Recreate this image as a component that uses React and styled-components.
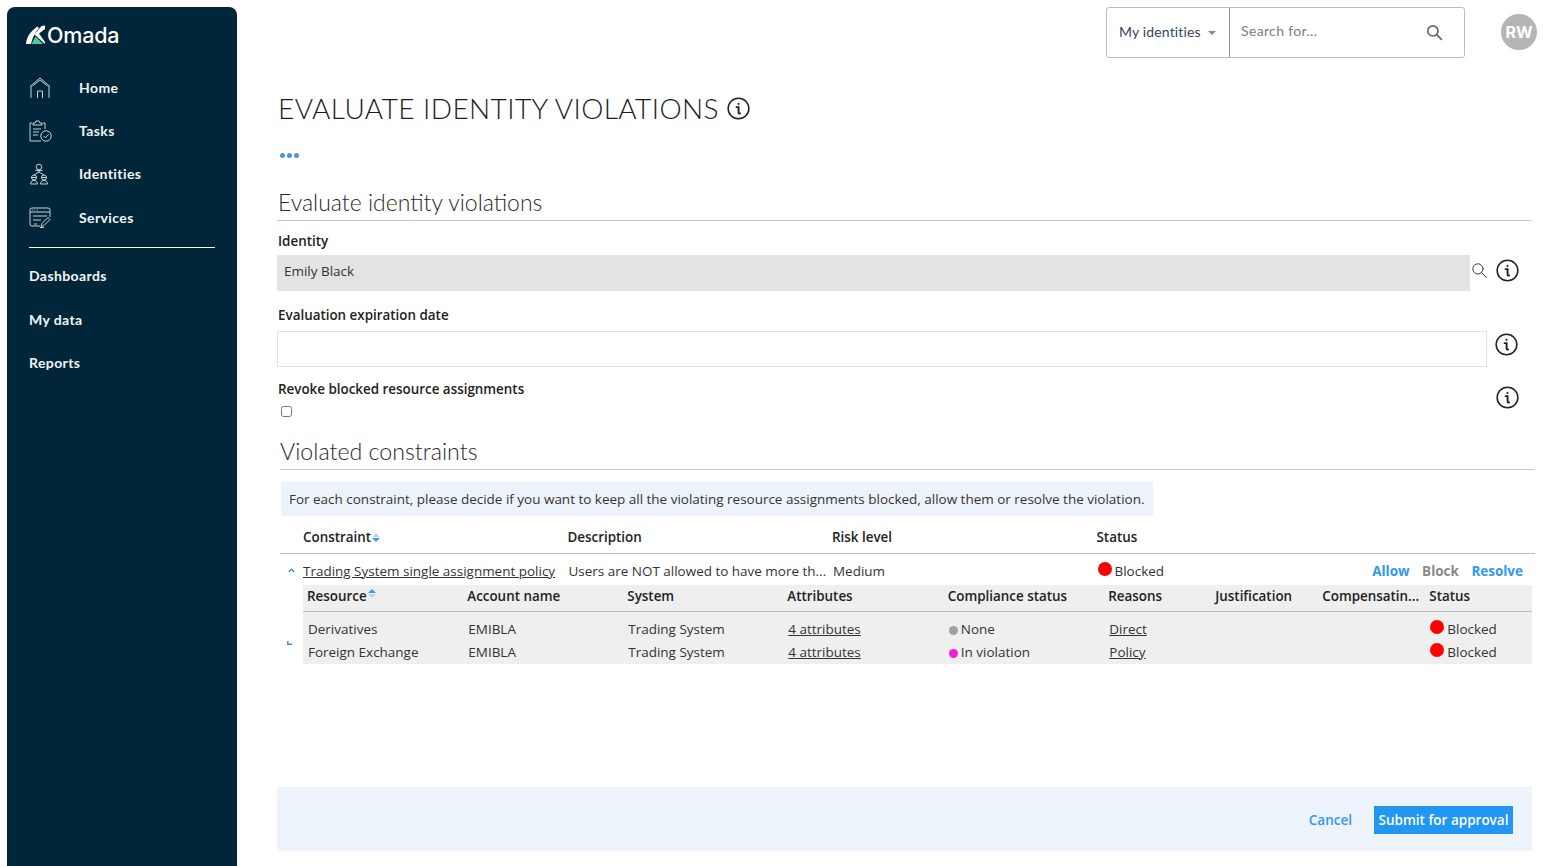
import React from "react";
import styled, { createGlobalStyle } from "styled-components";

const Global = createGlobalStyle`
  html, body { margin: 0; padding: 0; height: 866px; overflow: hidden; background: #fff; }
  * { box-sizing: border-box; }
  body { font-family: "Open Sans", "Liberation Sans", sans-serif; font-size: 13.47px; color: #333; }
`;

const Page = styled.div`
  display: flex;
  height: 866px;
  padding-top: 7px;
  padding-left: 7px;
`;

const Sidebar = styled.nav`
  width: 230px;
  flex: none;
  background: #012639;
  border-radius: 8px 8px 0 0;
  color: #f2f5f6;
  font-family: Lato, Inter, sans-serif;
  padding: 17px 0 0 18px;
`;

const Logo = styled.div`
  display: flex;
  align-items: center;
  gap: 1px;
  height: 22px;
  font-family: Inter, sans-serif;
  font-size: 21.5px;
  font-weight: 500;
  color: #fff;
  letter-spacing: -0.2px;
  margin-bottom: 20px;
`;

const MainNav = styled.div`
  display: flex;
  flex-direction: column;
  margin-left: 4px;
`;

const NavItem = styled.div`
  display: flex;
  align-items: center;
  height: ${(p) => p.$height}px;
  font-size: 14px;
  font-weight: 700;
  letter-spacing: 0.4px;
`;

const NavIcon = styled.span`
  width: 50px;
  flex: none;
  display: flex;
  align-items: center;
`;

const NavRule = styled.div`
  width: 186px;
  height: 1px;
  background: #fff;
  margin: 8px 0 6px 4px;
`;

const SubNav = styled.div`
  display: flex;
  flex-direction: column;
  margin-left: 4px;
`;

const Main = styled.main`
  flex: 1;
  min-width: 0;
  padding-left: 40px;
  display: flex;
  flex-direction: column;
  margin-top: -7px;
  padding-top: 7px;
`;

const TopBar = styled.div`
  display: flex;
  justify-content: flex-end;
  align-items: flex-start;
  padding-right: 14px;
  gap: 36px;
`;

const SearchBox = styled.div`
  width: 359px;
  height: 51px;
  display: flex;
  border: 1px solid #bdbdbd;
  border-radius: 3px;
  font-family: Lato, Inter, sans-serif;
`;

const ScopeButton = styled.div`
  width: 123px;
  display: flex;
  align-items: center;
  gap: 7px;
  padding: 0 0 2px 12px;
  border-right: 1px solid #8f8f8f;
  font-size: 14px;
  letter-spacing: 0.15px;
  color: #33475b;
`;

const Caret = styled.span`
  width: 0;
  height: 0;
  margin-top: 2px;
  border-left: 4px solid transparent;
  border-right: 4px solid transparent;
  border-top: 4px solid #8a8a8a;
`;

const SearchField = styled.div`
  flex: 1;
  display: flex;
  align-items: center;
  justify-content: space-between;
  padding: 0 21px 0 11px;
  font-size: 14px;
  letter-spacing: 0.35px;
  color: #7d7d7d;
`;

const SearchHint = styled.span`
  margin-top: -4px;
`;

const Avatar = styled.div`
  width: 36px;
  height: 36px;
  margin-top: 7px;
  border-radius: 50%;
  background: #b5b5b5;
  color: #fff;
  font-family: Inter, sans-serif;
  font-weight: 700;
  font-size: 16px;
  display: flex;
  align-items: center;
  justify-content: center;
`;

const Title = styled.h1`
  margin: 30px 0 0 1px;
  height: 40px;
  display: flex;
  align-items: center;
  gap: 8px;
  font-family: Lato, sans-serif;
  font-size: 28px;
  font-weight: 300;
  color: #1c1c1c;
  line-height: 40px;
  letter-spacing: 0.42px;
`;

const Dots = styled.div`
  display: flex;
  gap: 2px;
  margin: 25px 0 0 3px;
  height: 5px;
`;

const Dot = styled.i`
  width: 5px;
  height: 5px;
  border-radius: 50%;
  background: #4a97dd;
`;

const SectionHead = styled.h2`
  margin: ${(p) => p.$top}px 0 0 ${(p) => p.$left || 0}px;
  width: ${(p) => p.$width}px;
  height: 34px;
  line-height: 30px;
  padding-left: ${(p) => p.$inset || 0}px;
  border-bottom: 1px solid #c8c8c8;
  font-family: Lato, sans-serif;
  font-size: ${(p) => p.$size}px;
  font-weight: 300;
  color: #2a2a2a;
`;

const FieldRow = styled.div`
  display: flex;
  align-items: center;
  width: 1255px;
`;

const Label = styled.div`
  height: 20px;
  line-height: 20px;
  margin-top: ${(p) => p.$top}px;
  padding-left: 1px;
  font-size: 13.4px;
  font-weight: 600;
  color: #222;
`;

const ReadOnly = styled.div`
  width: 1193px;
  height: 36px;
  margin-top: 4px;
  background: #e3e3e3;
  line-height: 32px;
  padding-left: 7px;
  color: #333;
`;

const TextBox = styled.div`
  width: 1210px;
  height: 36px;
  margin-top: 6px;
  border: 1px solid #e2e2e2;
`;

const SearchSlot = styled.span`
  width: 26px;
  height: 36px;
  margin-top: 4px;
  display: flex;
  align-items: center;
  padding-left: 1px;
  padding-bottom: 6px;
`;

const InfoSlot = styled.span`
  margin-left: ${(p) => p.$left}px;
  margin-top: ${(p) => p.$top}px;
  display: flex;
`;

const CheckRow = styled.div`
  display: flex;
  justify-content: space-between;
  width: 1242px;
`;

const Check = styled.input`
  display: block;
  width: 11px;
  height: 11px;
  margin: 7px 0 0 4px;
`;

const Notice = styled.div`
  width: 872px;
  height: 34px;
  margin: 12px 0 0 4px;
  padding-left: 8px;
  background: #edf3fa;
  line-height: 34px;
  white-space: nowrap;
  color: #333;
`;

const TableHead = styled.div`
  display: grid;
  grid-template-columns: repeat(4, 264.5px) 1fr;
  width: 1255px;
  margin: 0 0 0 3px;
  padding: 4px 0 0 23px;
  height: 38px;
  align-items: center;
  border-bottom: 1px solid #bdbdbd;
  font-size: 13.4px;
  font-weight: 600;
  color: #222;
`;

const ConstraintRow = styled.div`
  display: grid;
  grid-template-columns: 23px repeat(3, 264.5px) 1fr auto;
  width: 1255px;
  margin-left: 3px;
  height: 31px;
  padding-top: 2px;
  align-items: center;
`;

const Sort = styled.span`
  display: inline-flex;
  flex-direction: column;
  gap: 1px;
  margin-left: 1px;
  margin-top: ${(p) => (p.$raised ? "2px" : "0")};
  vertical-align: ${(p) => (p.$raised ? "text-top" : "middle")};
`;

const Tri = styled.i`
  width: 0;
  height: 0;
  border-left: 4px solid transparent;
  border-right: 4px solid transparent;
  ${(p) => (p.$up ? "border-bottom" : "border-top")}: 4px solid ${(p) => (p.$on ? "#3f9be8" : "#bcd7ef")};
`;

const Toggle = styled.span`
  display: flex;
  padding-left: 8px;
`;

const TextLink = styled.a`
  color: #333;
  text-decoration: underline;
  white-space: nowrap;
`;

const Cell = styled.span`
  white-space: nowrap;
  padding-left: ${(p) => p.$pad || 0}px;
`;

const StatusDot = styled.i`
  display: inline-block;
  width: ${(p) => p.$size}px;
  height: ${(p) => p.$size}px;
  border-radius: 50%;
  background: ${(p) => p.$color};
  margin-right: ${(p) => p.$gap}px;
  vertical-align: ${(p) => p.$lift}px;
`;

const Actions = styled.div`
  display: flex;
  gap: 12.5px;
  padding-right: 12px;
  font-weight: 700;
`;

const Action = styled.a`
  color: ${(p) => (p.$muted ? "#8a8a8a" : "#3098f3")};
`;

const NestedWrap = styled.div`
  display: flex;
  margin-left: 3px;
  align-items: flex-end;
`;

const Corner = styled.span`
  width: 23px;
  flex: none;
  display: flex;
  padding: 0 0 19px 7px;
`;

const Nested = styled.div`
  width: 1229px;
  background: #efefef;
`;

const COLS = "160.3px 160px 160px 160.5px 160.5px 107px 107px 107px 1fr";

const NestedHead = styled.div`
  display: grid;
  grid-template-columns: ${COLS};
  height: 27px;
  padding: 0 0 5px 4px;
  align-items: center;
  border-bottom: 1px solid #bdbdbd;
  font-size: 13.4px;
  font-weight: 600;
  color: #222;
`;

const NestedRows = styled.div`
  padding: 5px 0 1px;
`;

const NestedRow = styled.div`
  display: grid;
  grid-template-columns: ${COLS};
  height: 23px;
  padding-left: 5px;
  align-items: center;
`;

const Spacer = styled.div`
  flex: 1;
`;

const Footer = styled.div`
  width: 1255px;
  height: 64px;
  margin-bottom: 15px;
  padding: 1px 19px 0 0;
  background: #edf3fa;
  display: flex;
  align-items: center;
  justify-content: flex-end;
  gap: 22px;
`;

const Cancel = styled.a`
  color: #3098f3;
  font-weight: 600;
  font-size: 13.5px;
`;

const Submit = styled.button`
  height: 28px;
  width: 139px;
  padding: 0;
  border: 0;
  background: #2196f3;
  color: #fff;
  white-space: nowrap;
  font: 600 13.5px "Open Sans", sans-serif;
`;

const InfoIcon = ({ size = 23 }) => (
  <svg width={size} height={size} viewBox="0 0 24 24" fill="none" stroke="#222" strokeWidth="1.6" strokeLinecap="round">
    <circle cx="12" cy="12" r="10.8" />
    <path d="M12 6.900v.5M10 10.600h2.100v5.600c0 .9.5 1.200 1.600.9" strokeWidth="2" />
  </svg>
);

const Magnifier = ({ size, color, width }) => (
  <svg width={size} height={size} viewBox="0 0 18 18" fill="none" stroke={color} strokeWidth={width} strokeLinecap="round">
    <circle cx="7.300" cy="7.300" r="5.400" />
    <path d="M11.300 11.300l5 5" />
  </svg>
);

const OmadaMark = () => (
  <svg width="21" height="20" viewBox="0 0 21 20">
    <path d="M1 19C1.500 12 5.500 6 12.500 1.500l1.500 1.500C10 7.500 7.500 13 6 19z" fill="#fff" />
    <path d="M9.500 9.500L16 1.500C17.500.8 19 .5 20 .5v3.500L14 8.500 20 17V19z" fill="#fff" />
    <path d="M6.500 19L10.500 11.500 18 19z" fill="#52c7a5" />
  </svg>
);

const HomeIcon = () => (
  <svg width="22" height="22" viewBox="0 0 22 22" fill="none" stroke="#c7d0d6" strokeWidth="1">
    <path d="M1 9.500L11 1l10 8.500M2 9v12M20 9v12M3.500 9L11 3l7.500 6M8.500 21v-7h5v7" />
  </svg>
);

const TasksIcon = () => (
  <svg width="23" height="22" viewBox="0 0 23 22" fill="none" stroke="#c7d0d6" strokeWidth="1">
    <path d="M3 3H1v18h11M14 3h2v6M4 3h2l1-2h3l1 2h2v2H4z" />
    <path d="M4 9h8M4 12h6M4 15h5" />
    <circle cx="17" cy="16" r="5.200" />
    <path d="M14.600 16l1.800 1.800 3.200-3.400" />
  </svg>
);

const PeopleIcon = () => (
  <svg width="20" height="22" viewBox="0 0 20 22" fill="none" stroke="#c7d0d6" strokeWidth="1">
    <circle cx="10" cy="4" r="2.800" />
    <path d="M6.500 7.500h7M10 7.500v2M5 12l5-3 5 3" />
    <circle cx="5" cy="14.500" r="2.500" />
    <circle cx="15" cy="14.500" r="2.500" />
    <path d="M1.500 21c.5-3 2-3.500 3.500-3.500S8 18 8.500 21zM11.500 21c.5-3 2-3.500 3.500-3.500s3 .5 3.500 3.500z" />
    <path d="M2 14.500h6M12 14.500h6" />
  </svg>
);

const ServicesIcon = () => (
  <svg width="22" height="21" viewBox="0 0 22 21" fill="none" stroke="#c7d0d6" strokeWidth="1">
    <path d="M11 19H3a2 2 0 0 1-2-2V3a2 2 0 0 1 2-2h16a2 2 0 0 1 2 2v7" />
    <path d="M1 5h20M3 3h.8M5.500 3h.8M8 3h.8M4 9h14M4 13h8M5 17h3" />
    <path d="M12 19.500l1-3 6-6 2 2-6 6zM11 20.500h4" />
  </svg>
);

const Up = ({ color = "#3f8fd8" }) => (
  <svg width="7" height="5" viewBox="0 0 7 5" fill="none" stroke={color} strokeWidth="1.300">
    <path d="M.7 4l2.800-2.800L6.300 4" />
  </svg>
);

const CornerMark = () => (
  <svg width="5" height="4" viewBox="0 0 5 4" fill="none" stroke="#3f8fd8" strokeWidth="1.500">
    <path d="M.8 0v3.200H5" />
  </svg>
);

const nav = [
  ["Home", <HomeIcon />],
  ["Tasks", <TasksIcon />],
  ["Identities", <PeopleIcon />],
  ["Services", <ServicesIcon />],
];

const rows = [
  ["Derivatives", "#a0a0a0", "None", "Direct"],
  ["Foreign Exchange", "#f020d8", "In violation", "Policy"],
];

export default function App() {
  return (
    <>
      <Global />
      <Page>
        <Sidebar>
          <Logo>
            <OmadaMark />
            Omada
          </Logo>
          <MainNav>
            {nav.map(([label, icon]) => (
              <NavItem key={label} $height={43.2}>
                <NavIcon>{icon}</NavIcon>
                {label}
              </NavItem>
            ))}
          </MainNav>
          <NavRule />
          <SubNav>
            {["Dashboards", "My data", "Reports"].map((l) => (
              <NavItem key={l} $height={43.5}>{l}</NavItem>
            ))}
          </SubNav>
        </Sidebar>
        <Main>
          <TopBar>
            <SearchBox>
              <ScopeButton>
                My identities <Caret />
              </ScopeButton>
              <SearchField>
                <SearchHint>Search for...</SearchHint>
                <Magnifier size={17} color="#666" width={1.8} />
              </SearchField>
            </SearchBox>
            <Avatar>RW</Avatar>
          </TopBar>
          <Title>
            EVALUATE IDENTITY VIOLATIONS <InfoIcon />
          </Title>
          <Dots>
            <Dot />
            <Dot />
            <Dot />
          </Dots>
          <SectionHead $top={29} $width={1255} $inset={1} $size={23}>
            Evaluate identity violations
          </SectionHead>
          <Label $top={10}>Identity</Label>
          <FieldRow>
            <ReadOnly>Emily Black</ReadOnly>
            <SearchSlot>
              <Magnifier size={17} color="#333" width={1} />
            </SearchSlot>
            <InfoSlot $left={0} $top={-2}>
              <InfoIcon />
            </InfoSlot>
          </FieldRow>
          <Label $top={14}>Evaluation expiration date</Label>
          <FieldRow>
            <TextBox />
            <InfoSlot $left={8} $top={-4}>
              <InfoIcon />
            </InfoSlot>
          </FieldRow>
          <CheckRow>
            <div>
              <Label $top={12}>Revoke blocked resource assignments</Label>
              <Check type="checkbox" />
            </div>
            <InfoSlot $left={0} $top={19}>
              <InfoIcon />
            </InfoSlot>
          </CheckRow>
          <SectionHead $top={19} $left={3} $width={1255} $size={23.2}>
            Violated constraints
          </SectionHead>
          <Notice>
            For each constraint, please decide if you want to keep all the violating resource assignments blocked, allow them or resolve the violation.
          </Notice>
          <TableHead>
            <span>
              Constraint
              <Sort>
                <Tri $up />
                <Tri $on />
              </Sort>
            </span>
            <span>Description</span>
            <span>Risk level</span>
            <span>Status</span>
          </TableHead>
          <ConstraintRow>
            <Toggle>
              <Up />
            </Toggle>
            <TextLink>Trading System single assignment policy</TextLink>
            <Cell $pad={1}>Users are NOT allowed to have more th...</Cell>
            <Cell $pad={1}>Medium</Cell>
            <Cell $pad={1}>
              <StatusDot $size={14} $color="#f00" $gap={3} $lift={0} />
              Blocked
            </Cell>
            <Actions>
              <Action>Allow</Action>
              <Action $muted>Block</Action>
              <Action>Resolve</Action>
            </Actions>
          </ConstraintRow>
          <NestedWrap>
            <Corner>
              <CornerMark />
            </Corner>
            <Nested>
              <NestedHead>
                <span>
                  Resource
                  <Sort $raised>
                    <Tri $up $on />
                    <Tri />
                  </Sort>
                </span>
                <span>Account name</span>
                <span>System</span>
                <span>Attributes</span>
                <span>Compliance status</span>
                <span>Reasons</span>
                <span>Justification</span>
                <span>Compensatin...</span>
                <span>Status</span>
              </NestedHead>
              <NestedRows>
                {rows.map(([res, col, comp, reason]) => (
                  <NestedRow key={res}>
                    <Cell>{res}</Cell>
                    <Cell>EMIBLA</Cell>
                    <Cell>Trading System</Cell>
                    <TextLink>4 attributes</TextLink>
                    <Cell>
                      <StatusDot $size={9} $color={col} $gap={3} $lift={-1} />
                      {comp}
                    </Cell>
                    <TextLink>{reason}</TextLink>
                    <span />
                    <span />
                    <Cell>
                      <StatusDot $size={14} $color="#f00" $gap={3} $lift={0} />
                      Blocked
                    </Cell>
                  </NestedRow>
                ))}
              </NestedRows>
            </Nested>
          </NestedWrap>
          <Spacer />
          <Footer>
            <Cancel>Cancel</Cancel>
            <Submit>Submit for approval</Submit>
          </Footer>
        </Main>
      </Page>
    </>
  );
}
